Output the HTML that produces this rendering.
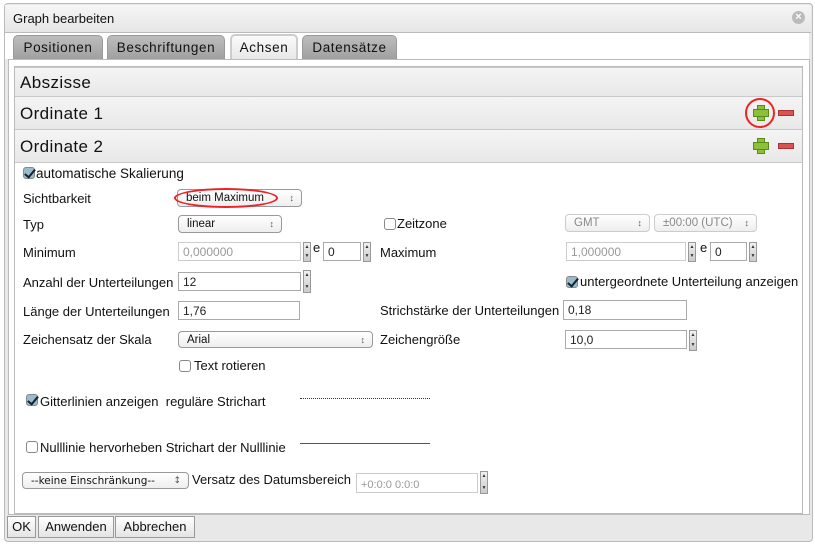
<!DOCTYPE html>
<html><head><meta charset="utf-8"><style>
*{box-sizing:border-box}
body{margin:0;width:815px;height:545px;background:#fff;font-family:"Liberation Sans",sans-serif;font-size:13px;color:#111;position:relative;overflow:hidden}
.a{position:absolute}
.lbl{position:absolute;white-space:nowrap}
.inp{position:absolute;border:1px solid #aaa;background:#fff;font-size:12px;padding:2px 4px;line-height:14px;color:#222}
.dis{color:#999;border-color:#ccc}
.sel{position:absolute;border:1px solid #999;border-radius:4px;background:linear-gradient(#fff,#eee);font-size:11.5px;padding:1px 8px;line-height:14px}
.sel:after{content:"\2195";position:absolute;right:7px;top:1px;font-size:9px;color:#555}
.seld{color:#888;border-color:#ccc}
.spin{position:absolute;width:8px;background:linear-gradient(#f0f0f0,#ccc);border:1px solid #999;font-size:5px;line-height:9px;text-align:center;color:#333}
.spin:before{content:"\25B2";position:absolute;left:0;right:0;top:0}
.spin:after{content:"\25BC";position:absolute;left:0;right:0;bottom:0}
.cb{position:absolute;width:12px;height:12px;border:1px solid #888;border-radius:3px;background:#fff}
.cb.on{background:#9bc;}
.cb.on:after{content:"";position:absolute;left:3px;top:-1px;width:4px;height:9px;border:solid #123;border-width:0 2px 2px 0;transform:rotate(40deg)}
.hdr{position:absolute;left:15px;width:787px;border-top:1px solid #c8c8c8;background:linear-gradient(#f4f4f4,#e8e8e8);font-size:17px;letter-spacing:.4px;padding-left:5px}
.tab{position:absolute;top:35px;height:24px;border:1px solid #999;border-bottom:none;border-radius:5px 5px 0 0;background:linear-gradient(#bdbdbd,#a0a0a0);font-size:13.5px;letter-spacing:.6px;text-align:center;line-height:24px}
.btn{position:absolute;top:516px;height:22px;border:1px solid #999;background:linear-gradient(#fff,#e4e4e4);font-size:13px;line-height:20px;text-align:center}
.plus{position:absolute;width:14px;height:14px}
.plus:before{content:"";position:absolute;left:4px;top:0;width:6px;height:14px;background:#8cbf3a;border:1px solid #5a8a18}
.plus:after{content:"";position:absolute;left:0;top:4px;width:14px;height:6px;background:#8cbf3a;border:1px solid #5a8a18;border-left-color:#5a8a18}
.minus{position:absolute;width:16px;height:6px;background:#d9534f;border:1px solid #a33}
</style></head><body>
<div class="a" style="left:4px;top:3px;width:809px;height:539px;border:1px solid #bbb;border-radius:4px;background:#e8e8e8"></div>
<div class="a" style="left:5px;top:5px;width:806px;height:28px;background:linear-gradient(#f6f6f6,#e6e6e6);border-bottom:1px solid #bbb"></div>
<div class="lbl" style="left:13px;top:11px;font-size:13px">Graph bearbeiten</div>
<div class="a" style="left:792px;top:11px;width:13px;height:13px;border-radius:50%;background:#bbb;color:#fff;font-size:11px;line-height:13px;text-align:center;font-weight:bold">×</div>
<div class="a" style="left:5px;top:33px;width:804px;height:26px;background:#fff"></div>
<div class="tab" style="left:13px;width:90px">Positionen</div>
<div class="tab" style="left:107px;width:118px">Beschriftungen</div>
<div class="tab" style="left:230px;width:68px;background:linear-gradient(#fafafa,#e8e8e8);border:2px solid #ccc;border-bottom:none;top:34px;height:25px">Achsen</div>
<div class="tab" style="left:302px;width:95px">Datensätze</div>
<div class="a" style="left:8px;top:59px;width:802px;height:456px;background:#fff;border:1px solid #bbb"></div>
<div class="a" style="left:14px;top:66px;width:789px;height:448px;border:1px solid #bbb;background:#fff"></div>
<div class="hdr" style="top:67px;height:30px;line-height:30px;font-weight:500">Abszisse</div>
<div class="hdr" style="top:96px;height:34px;line-height:34px">Ordinate 1</div>
<div class="hdr" style="top:129px;height:34px;line-height:34px;border-bottom:1px solid #c8c8c8">Ordinate 2</div>
<div class="plus" style="left:753px;top:105px"></div><div class="minus" style="left:778px;top:110px"></div>
<div class="a" style="left:745px;top:98px;width:30px;height:30px;border:2px solid #e22;border-radius:50%"></div>
<div class="plus" style="left:753px;top:138px"></div><div class="minus" style="left:778px;top:143px"></div>

<div class="cb on" style="left:23px;top:167px"></div><div class="lbl" style="left:36px;top:166px;font-size:13.5px">automatische Skalierung</div>
<div class="lbl" style="left:23px;top:191px">Sichtbarkeit</div>
<div class="sel" style="left:177px;top:189px;width:125px;height:18px">beim Maximum</div>
<div class="a" style="left:174px;top:188px;width:104px;height:20px;border:2px solid #e22;border-radius:50%"></div>
<div class="lbl" style="left:23px;top:217px">Typ</div>
<div class="sel" style="left:178px;top:215px;width:104px;height:18px">linear</div>
<div class="cb" style="left:384px;top:218px"></div><div class="lbl" style="left:397px;top:216px">Zeitzone</div>
<div class="sel seld" style="left:565px;top:214px;width:85px;height:18px">GMT</div>
<div class="sel seld" style="left:654px;top:214px;width:103px;height:18px">±00:00 (UTC)</div>

<div class="lbl" style="left:23px;top:245px">Minimum</div>
<div class="inp dis" style="left:178px;top:242px;width:123px;height:19px">0,000000</div>
<div class="spin" style="left:303px;top:242px;height:20px"></div>
<div class="lbl" style="left:313px;top:240px">e</div>
<div class="inp" style="left:323px;top:242px;width:38px;height:19px">0</div>
<div class="spin" style="left:363px;top:242px;height:20px"></div>
<div class="lbl" style="left:380px;top:245px">Maximum</div>
<div class="inp dis" style="left:566px;top:242px;width:120px;height:19px">1,000000</div>
<div class="spin" style="left:688px;top:242px;height:20px"></div>
<div class="lbl" style="left:700px;top:240px">e</div>
<div class="inp" style="left:710px;top:242px;width:37px;height:19px">0</div>
<div class="spin" style="left:749px;top:242px;height:20px"></div>

<div class="lbl" style="left:23px;top:275px">Anzahl der Unterteilungen</div>
<div class="inp" style="left:178px;top:272px;width:123px;height:19px">12</div>
<div class="spin" style="left:303px;top:270px;height:23px"></div>
<div class="cb on" style="left:566px;top:276px"></div><div class="lbl" style="left:580px;top:274px">untergeordnete Unterteilung anzeigen</div>

<div class="lbl" style="left:23px;top:304px">Länge der Unterteilungen</div>
<div class="inp" style="left:178px;top:301px;width:122px;height:19px">1,76</div>
<div class="lbl" style="left:380px;top:303px">Strichstärke der Unterteilungen</div>
<div class="inp" style="left:563px;top:300px;width:124px;height:20px">0,18</div>

<div class="lbl" style="left:23px;top:332px">Zeichensatz der Skala</div>
<div class="sel" style="left:178px;top:331px;width:195px;height:17px">Arial</div>
<div class="lbl" style="left:380px;top:332px">Zeichengröße</div>
<div class="inp" style="left:565px;top:330px;width:122px;height:19px">10,0</div>
<div class="spin" style="left:689px;top:330px;height:21px"></div>
<div class="cb" style="left:179px;top:360px"></div><div class="lbl" style="left:194px;top:358px">Text rotieren</div>

<div class="cb on" style="left:26px;top:394px"></div><div class="lbl" style="left:40px;top:394px">Gitterlinien anzeigen&nbsp; reguläre Strichart</div>
<div class="a" style="left:300px;top:398px;width:130px;border-top:1px dotted #333"></div>
<div class="cb" style="left:26px;top:441px"></div><div class="lbl" style="left:40px;top:440px">Nulllinie hervorheben Strichart der Nulllinie</div>
<div class="a" style="left:300px;top:443px;width:130px;border-top:1px solid #555"></div>

<div class="sel" style="left:22px;top:472px;width:167px;height:17px;font-family:'DejaVu Sans',sans-serif;font-size:10.5px">--keine Einschränkung--</div>
<div class="lbl" style="left:192px;top:472px">Versatz des Datumsbereich</div>
<div class="inp dis" style="left:356px;top:473px;width:122px;height:20px;font-size:11px;padding-top:4px">+0:0:0 0:0:0</div>
<div class="spin" style="left:480px;top:471px;height:23px"></div>

<div class="btn" style="left:7px;width:29px">OK</div>
<div class="btn" style="left:38px;width:76px">Anwenden</div>
<div class="btn" style="left:115px;width:80px">Abbrechen</div>
</body></html>
